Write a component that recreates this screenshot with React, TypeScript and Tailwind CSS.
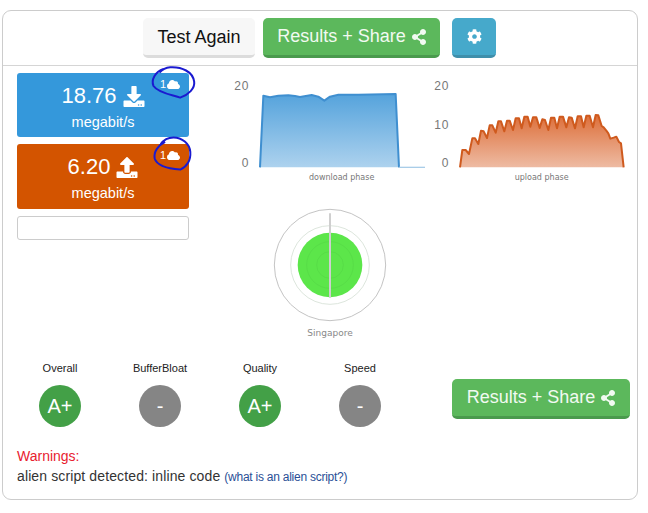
import { FaCloud, FaCog, FaDownload, FaShareAlt, FaUpload } from "react-icons/fa";

const FONT = "font-['Liberation_Sans',Arial,sans-serif]";

const UPLOAD_POINTS =
  "105,292 112,240 122,240 132,252 142,205 150,205 160,222 168,182 176,184 186,204 194,166 202,166 212,188 220,154 228,154 238,184 246,152 254,152 264,180 272,145 282,145 290,175 298,140 308,140 316,170 324,142 334,142 344,174 352,148 360,150 370,180 378,143 388,143 396,175 404,140 414,140 424,172 432,142 440,143 450,175 458,139 468,139 476,172 484,137 494,137 504,172 512,135 520,136 530,168 536,172 544,182 550,190 556,206 566,203 574,200 582,216 588,220 596,292";

const DOWNLOAD_POINTS =
  "105,292 115,77 135,82 160,77 190,76 210,78 225,81 260,75 280,80 298,92 315,80 340,74 400,74 512,72 522,292";

const GRADES = [
  { label: "Overall", grade: "A+", color: "bg-[#43a047]" },
  { label: "BufferBloat", grade: "-", color: "bg-[#858585]" },
  { label: "Quality", grade: "A+", color: "bg-[#43a047]" },
  { label: "Speed", grade: "-", color: "bg-[#858585]" },
];

function ResultsButton({ width }: { width: string }) {
  return (
    <button className={`flex h-10 items-start justify-center gap-[5px] rounded-[5px] border-b-[3px] border-[#4a9a4d] bg-[#5cb85c] pl-[1px] pt-[6px] text-lg leading-[25px] text-[#f1faf1] ${width}`}>
      Results + Share
      <FaShareAlt className="mt-[5px] h-[16px] w-[16px]" />
    </button>
  );
}

function SpeedCard({
  value,
  bg,
  Icon,
  children,
  className,
}: {
  value: string;
  bg: string;
  Icon: React.ElementType;
  children: React.ReactNode;
  className: string;
}) {
  return (
    <div className={`relative flex flex-col items-center rounded-[3px] pt-[7px] text-white ${bg} ${className}`}>
      <div className="flex items-center gap-[6px] text-[22px] leading-[32px]">
        {value}
        <Icon className="h-[21px] w-[22px]" />
      </div>
      <div className="text-[14.5px] leading-[20px]">megabit/s</div>
      {children}
    </div>
  );
}

function CloudBadge({ top }: { top: string }) {
  return (
    <div className={`absolute right-[9px] flex items-center gap-[1px] text-[11px] leading-none text-white ${top}`}>
      1
      <FaCloud className="h-[13px] w-[13px]" />
    </div>
  );
}

function Chart({
  points,
  tail,
  stroke,
  gradId,
  top,
  bottom,
  label,
  labelX,
  ticks,
}: {
  points: string;
  tail?: boolean;
  stroke: string;
  gradId: string;
  top: string;
  bottom: string;
  label: string;
  labelX: number;
  ticks: { y: number; text: string }[];
}) {
  return (
    <svg width="200" height="120" viewBox="0 0 600 360" className="shrink-0">
      <defs>
        <linearGradient id={gradId} x1="0" y1="0" x2="0" y2="1">
          <stop offset="0" stopColor={top} />
          <stop offset="1" stopColor={bottom} />
        </linearGradient>
      </defs>
      {ticks.map((t) => (
        <text key={t.text} x="72" y={t.y} textAnchor="end" fontSize="36" fill="#777" letterSpacing="2">
          {t.text}
        </text>
      ))}
      <polygon points={points} fill={`url(#${gradId})`} />
      <polyline points={points} fill="none" stroke={stroke} strokeWidth="6" strokeLinejoin="round" />
      {tail && <line x1="522" y1="292" x2="600" y2="292" stroke="#a9cde8" strokeWidth="4" />}
      <text x={labelX} y="331" textAnchor="middle" fontSize="24" fill="#777" fontFamily="'DejaVu Sans', sans-serif">
        {label}
      </text>
    </svg>
  );
}

function Radar() {
  return (
    <svg width="140" height="145" viewBox="0 0 420 435" className="ml-[35px] mt-[10px]">
      <circle cx="210" cy="195" r="167" fill="none" stroke="#c4c4c4" strokeWidth="3" />
      <circle cx="210" cy="195" r="118" fill="none" stroke="#dde6dd" strokeWidth="3" />
      <circle cx="210" cy="195" r="97" fill="#5ce64a" />
      <circle cx="210" cy="195" r="70" fill="none" stroke="#55d845" strokeWidth="2" />
      <circle cx="210" cy="195" r="40" fill="none" stroke="#55d845" strokeWidth="2" />
      <line x1="210" y1="40" x2="210" y2="293" stroke="#cfcfcf" strokeWidth="6" />
      <text x="210" y="407" textAnchor="middle" fontSize="27" fill="#888" fontFamily="'DejaVu Sans', sans-serif">
        Singapore
      </text>
    </svg>
  );
}

export default function App() {
  return (
    <div className={`h-[513px] w-[648px] overflow-hidden bg-white pl-[2px] pt-[10px] ${FONT}`}>
      <div className="flex h-[490px] w-[636px] flex-col rounded-[9px] border border-[#cccccc]">
        {/* Top buttons */}
        <div className="flex h-[55px] justify-center gap-2 border-b border-[#d5d5d5] pr-[1px] pt-[7px]">
          <button className="h-10 w-[112px] rounded-[5px] border-b-[3px] border-[#dcdcdc] bg-[#f7f7f7] text-lg leading-[24px] text-[#111]">
            Test Again
          </button>
          <ResultsButton width="w-[177px]" />
          <button className="ml-1 flex h-10 w-11 items-center justify-center rounded-[5px] border-b-[3px] border-[#3f8fab] bg-[#46a9cb] text-white">
            <FaCog className="h-[15px] w-[15px]" />
          </button>
        </div>

        <div className="flex">
          {/* Speed cards */}
          <div className="ml-[14px] flex w-[172px] flex-col pt-[7px]">
            <SpeedCard value="18.76" bg="bg-[#3498db]" Icon={FaDownload} className="h-16">
              <CloudBadge top="top-[5px]" />
              <svg viewBox="450 195 140 105" className="absolute left-[133px] top-[-8px] h-[35px] w-[47px]" fill="none" stroke="#1a1ad0" strokeWidth="6">
                <path d="M490,207 C465,215 452,240 460,258 C475,280 520,285 540,293 C565,285 585,265 582,245 C578,215 545,200 510,202 C495,203 485,210 478,218" />
              </svg>
            </SpeedCard>
            <SpeedCard value="6.20" bg="bg-[#d35400]" Icon={FaUpload} className="mt-[7px] h-[65px]">
              <CloudBadge top="top-[5px]" />
              <svg viewBox="450 405 140 110" className="absolute left-[133px] top-[-9px] h-[37px] w-[47px]" fill="none" stroke="#1a1ad0" strokeWidth="6">
                <path d="M495,425 C475,435 460,455 464,475 C470,495 500,505 540,508 C560,500 572,480 570,455 C568,430 545,412 520,412 C505,412 490,420 482,432" />
              </svg>
            </SpeedCard>
            <input className="mt-[7px] h-6 rounded-[3px] border border-[#cccccc] bg-white" />
          </div>

          {/* Charts and radar */}
          <div className="ml-[36px] flex flex-col pt-[4px]">
            <div className="flex">
              <Chart
                points={DOWNLOAD_POINTS}
                tail
                stroke="#3f8fd0"
                gradId="dl"
                top="#55a3dc"
                bottom="#add2ee"
                label="download phase"
                labelX={350}
                ticks={[
                  { y: 60, text: "20" },
                  { y: 292, text: "0" },
                ]}
              />
              <Chart
                points={UPLOAD_POINTS}
                stroke="#cf5a1e"
                gradId="ul"
                top="#dd6f3a"
                bottom="#eebba3"
                label="upload phase"
                labelX={350}
                ticks={[
                  { y: 60, text: "20" },
                  { y: 177, text: "10" },
                  { y: 292, text: "0" },
                ]}
              />
            </div>
            <Radar />
          </div>
        </div>

        {/* Grades */}
        <div className="mt-[16px] flex pl-[7px]">
          {GRADES.map((g) => (
            <div key={g.label} className="flex w-[100px] flex-col items-center">
              <div className="text-[11px] leading-[15px] text-[#222]">{g.label}</div>
              <div className={`mt-[9px] flex h-[42px] w-[42px] items-center justify-center rounded-full text-xl text-white ${g.color}`}>
                {g.grade}
              </div>
            </div>
          ))}
          <div className="ml-[42px] pt-[18px]">
            <ResultsButton width="w-[178px]" />
          </div>
        </div>

        {/* Warnings */}
        <div className="mt-[19px] pl-[14px] text-sm leading-[20px] tracking-[0.12px] text-[#333]">
          <div className="tracking-normal text-[#e8212f]">Warnings:</div>
          <div>
            alien script detected: inline code{" "}
            <span className="text-xs tracking-[-0.25px] text-[#2a4f96]">
              (<a href="#">what is an alien script?</a>)
            </span>
          </div>
        </div>
      </div>
    </div>
  );
}
